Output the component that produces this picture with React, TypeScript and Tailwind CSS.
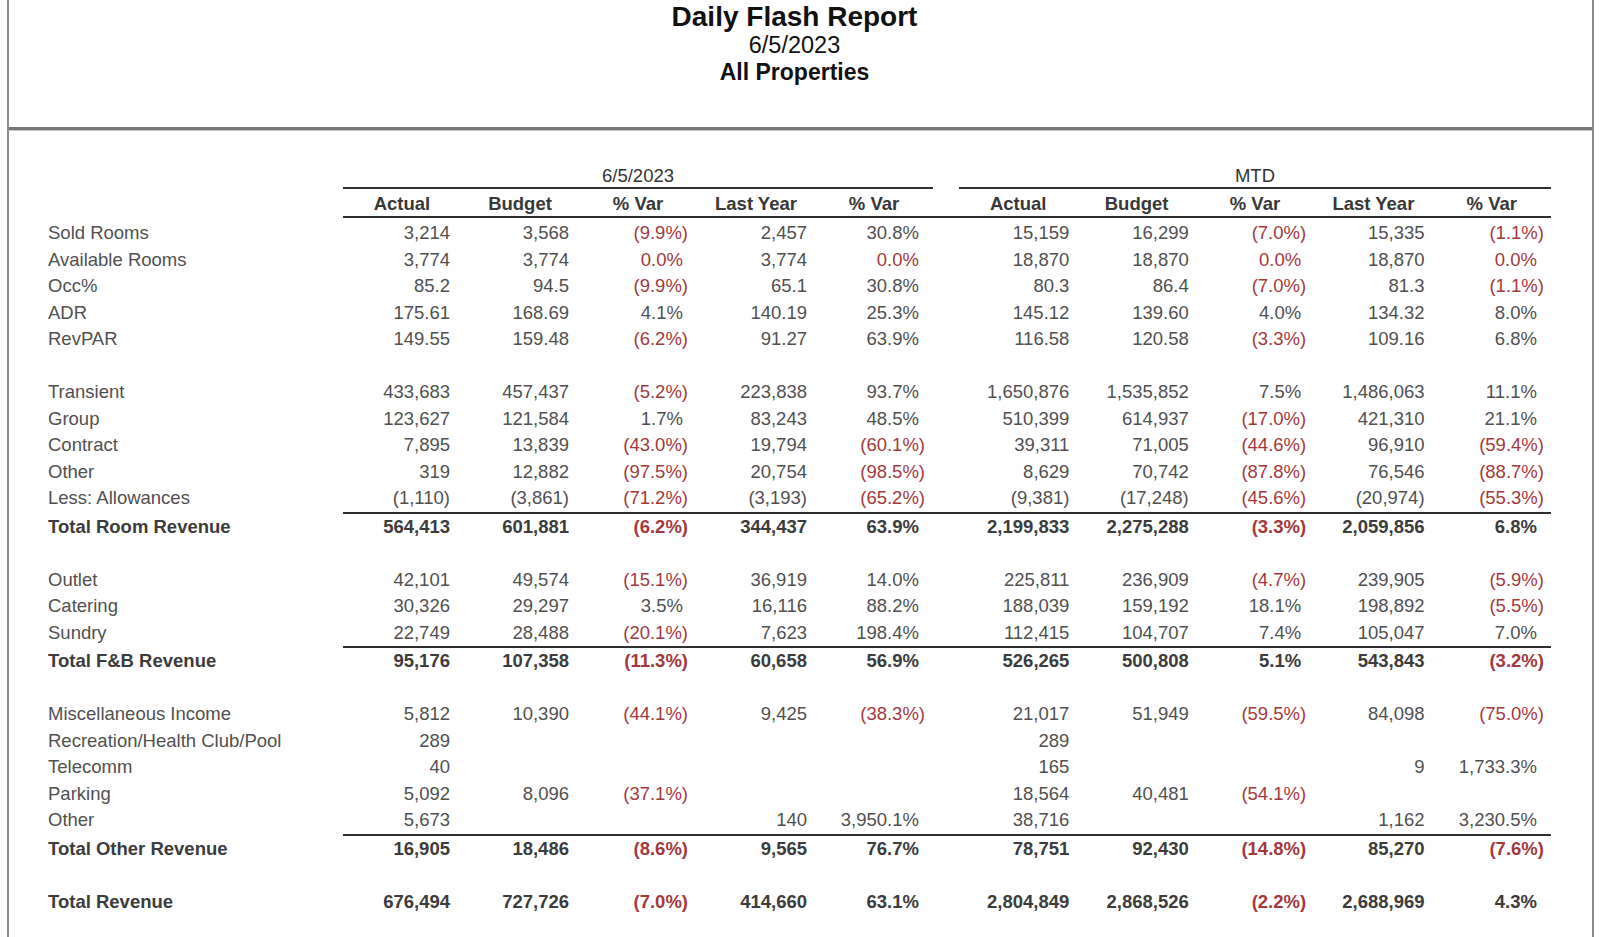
import { FunctionComponent } from 'react';

type Row =
  | { kind: 'blank' }
  | { kind: 'data'; label: string; day: string[]; mtd: string[]; total?: boolean };

const dayCols = ['Actual', 'Budget', '% Var', 'Last Year', '% Var'];

// right padding per column: [plain, parenthesised]
const dayPad = [
  ['pr-[11px]', 'pr-[11px]'],
  ['pr-[10px]', 'pr-[10px]'],
  ['pr-[14px]', 'pr-[9px]'],
  ['pr-[8px]', 'pr-[8px]'],
  ['pr-[14px]', 'pr-[8px]'],
];
const mtdPad = [
  ['pr-[8px]', 'pr-[8px]'],
  ['pr-[7px]', 'pr-[7px]'],
  ['pr-[13px]', 'pr-[8px]'],
  ['pr-[8px]', 'pr-[8px]'],
  ['pr-[14px]', 'pr-[7px]'],
];

const rows: Row[] = [
  { kind: 'data', label: 'Sold Rooms', day: ['3,214', '3,568', '(9.9%)', '2,457', '30.8%'], mtd: ['15,159', '16,299', '(7.0%)', '15,335', '(1.1%)'] },
  { kind: 'data', label: 'Available Rooms', day: ['3,774', '3,774', '0.0%', '3,774', '0.0%'], mtd: ['18,870', '18,870', '0.0%', '18,870', '0.0%'] },
  { kind: 'data', label: 'Occ%', day: ['85.2', '94.5', '(9.9%)', '65.1', '30.8%'], mtd: ['80.3', '86.4', '(7.0%)', '81.3', '(1.1%)'] },
  { kind: 'data', label: 'ADR', day: ['175.61', '168.69', '4.1%', '140.19', '25.3%'], mtd: ['145.12', '139.60', '4.0%', '134.32', '8.0%'] },
  { kind: 'data', label: 'RevPAR', day: ['149.55', '159.48', '(6.2%)', '91.27', '63.9%'], mtd: ['116.58', '120.58', '(3.3%)', '109.16', '6.8%'] },
  { kind: 'blank' },
  { kind: 'data', label: 'Transient', day: ['433,683', '457,437', '(5.2%)', '223,838', '93.7%'], mtd: ['1,650,876', '1,535,852', '7.5%', '1,486,063', '11.1%'] },
  { kind: 'data', label: 'Group', day: ['123,627', '121,584', '1.7%', '83,243', '48.5%'], mtd: ['510,399', '614,937', '(17.0%)', '421,310', '21.1%'] },
  { kind: 'data', label: 'Contract', day: ['7,895', '13,839', '(43.0%)', '19,794', '(60.1%)'], mtd: ['39,311', '71,005', '(44.6%)', '96,910', '(59.4%)'] },
  { kind: 'data', label: 'Other', day: ['319', '12,882', '(97.5%)', '20,754', '(98.5%)'], mtd: ['8,629', '70,742', '(87.8%)', '76,546', '(88.7%)'] },
  { kind: 'data', label: 'Less: Allowances', day: ['(1,110)', '(3,861)', '(71.2%)', '(3,193)', '(65.2%)'], mtd: ['(9,381)', '(17,248)', '(45.6%)', '(20,974)', '(55.3%)'] },
  { kind: 'data', label: 'Total Room Revenue', total: true, day: ['564,413', '601,881', '(6.2%)', '344,437', '63.9%'], mtd: ['2,199,833', '2,275,288', '(3.3%)', '2,059,856', '6.8%'] },
  { kind: 'blank' },
  { kind: 'data', label: 'Outlet', day: ['42,101', '49,574', '(15.1%)', '36,919', '14.0%'], mtd: ['225,811', '236,909', '(4.7%)', '239,905', '(5.9%)'] },
  { kind: 'data', label: 'Catering', day: ['30,326', '29,297', '3.5%', '16,116', '88.2%'], mtd: ['188,039', '159,192', '18.1%', '198,892', '(5.5%)'] },
  { kind: 'data', label: 'Sundry', day: ['22,749', '28,488', '(20.1%)', '7,623', '198.4%'], mtd: ['112,415', '104,707', '7.4%', '105,047', '7.0%'] },
  { kind: 'data', label: 'Total F&B Revenue', total: true, day: ['95,176', '107,358', '(11.3%)', '60,658', '56.9%'], mtd: ['526,265', '500,808', '5.1%', '543,843', '(3.2%)'] },
  { kind: 'blank' },
  { kind: 'data', label: 'Miscellaneous Income', day: ['5,812', '10,390', '(44.1%)', '9,425', '(38.3%)'], mtd: ['21,017', '51,949', '(59.5%)', '84,098', '(75.0%)'] },
  { kind: 'data', label: 'Recreation/Health Club/Pool', day: ['289', '', '', '', ''], mtd: ['289', '', '', '', ''] },
  { kind: 'data', label: 'Telecomm', day: ['40', '', '', '', ''], mtd: ['165', '', '', '9', '1,733.3%'] },
  { kind: 'data', label: 'Parking', day: ['5,092', '8,096', '(37.1%)', '', ''], mtd: ['18,564', '40,481', '(54.1%)', '', ''] },
  { kind: 'data', label: 'Other', day: ['5,673', '', '', '140', '3,950.1%'], mtd: ['38,716', '', '', '1,162', '3,230.5%'] },
  { kind: 'data', label: 'Total Other Revenue', total: true, day: ['16,905', '18,486', '(8.6%)', '9,565', '76.7%'], mtd: ['78,751', '92,430', '(14.8%)', '85,270', '(7.6%)'] },
  { kind: 'blank' },
  { kind: 'data', label: 'Total Revenue', total: true, day: ['676,494', '727,726', '(7.0%)', '414,660', '63.1%'], mtd: ['2,804,849', '2,868,526', '(2.2%)', '2,688,969', '4.3%'] },
];

const isRed = (v: string) => v.includes('%') && (v.startsWith('(') || v === '0.0%');

interface ICell {
  value: string;
  pad: string[];
  width: string;
}

const Cell: FunctionComponent<ICell> = ({ value, pad, width }): JSX.Element => (
  <div
    className={`${width} shrink-0 text-right ${value.startsWith('(') ? pad[1] : pad[0]} ${
      isRed(value) ? 'text-[#a3393d]' : ''
    }`}
  >
    {value}
  </div>
);

export default function App() {
  return (
    <div className="w-[1600px] h-[937px] bg-white overflow-hidden font-['Liberation_Sans',Arial,sans-serif]">
      <div className="ml-[7px] w-[1587px] h-[937px] border-x-2 border-[#8c8c8c] flex flex-col">
        {/* report title */}
        <div className="h-[127px] flex flex-col items-center pt-[3px] pr-[12px] text-[#111]">
          <div className="text-[28px] font-bold leading-[28px]">Daily Flash Report</div>
          <div className="text-[23.5px] leading-[28px]">6/5/2023</div>
          <div className="text-[23px] font-bold leading-[26px]">All Properties</div>
        </div>
        <div className="h-[3px] bg-[#767676]" />
        <div className="h-[1px] bg-[#c4c4c4]" />

        <div className="pl-[39px] pt-[32px] text-[18.5px] text-[#505050]">
          {/* group headers */}
          <div className="flex h-[26px] leading-[26px] text-[#333]">
            <div className="w-[295px] shrink-0" />
            <div className="w-[590px] shrink-0 text-center border-b-2 border-[#2e2e2e]">6/5/2023</div>
            <div className="w-[26px] shrink-0" />
            <div className="w-[592px] shrink-0 text-center border-b-2 border-[#2e2e2e]">MTD</div>
          </div>
          {/* column headers */}
          <div className="flex">
            <div className="w-[295px] shrink-0" />
            <div className="flex h-[29px] pt-[2px] leading-[25px] font-bold text-[#383838] border-b-2 border-[#2e2e2e]">
              {dayCols.map((c, i) => (
                <div key={'d' + i} className="w-[118px] shrink-0 text-center">
                  {c}
                </div>
              ))}
              <div className="w-[26px] shrink-0" />
              {dayCols.map((c, i) => (
                <div key={'m' + i} className="w-[118.4px] shrink-0 text-center">
                  {c}
                </div>
              ))}
            </div>
          </div>
          <div className="h-[2px]" />

          {rows.map((row, i) =>
            row.kind === 'blank' ? (
              <div key={i} className="h-[26.5px]" />
            ) : (
              <div key={i} className={`flex ${row.total ? 'font-bold text-[#3c3c3c]' : ''}`}>
                <div
                  className={`w-[295px] shrink-0 whitespace-nowrap ${
                    row.total
                      ? row.label === 'Total Revenue'
                        ? 'h-[27px] leading-[26px]'
                        : 'h-[28.5px] pt-[2px] leading-[26.5px]'
                      : 'h-[26.5px] leading-[26.5px]'
                  }`}
                >
                  {row.label}
                </div>
                <div
                  className={`flex ${
                    row.total
                      ? row.label === 'Total Revenue'
                        ? 'h-[27px] leading-[26px]'
                        : 'h-[28.5px] leading-[26.5px] border-t-2 border-[#2e2e2e]'
                      : 'h-[26.5px] leading-[26.5px]'
                  }`}
                >
                  {row.day.map((v, j) => (
                    <Cell key={'d' + j} value={v} pad={dayPad[j]} width="w-[118px]" />
                  ))}
                  <div className="w-[26px] shrink-0" />
                  {row.mtd.map((v, j) => (
                    <Cell key={'m' + j} value={v} pad={mtdPad[j]} width="w-[118.4px]" />
                  ))}
                </div>
              </div>
            )
          )}
        </div>
      </div>
    </div>
  );
}
